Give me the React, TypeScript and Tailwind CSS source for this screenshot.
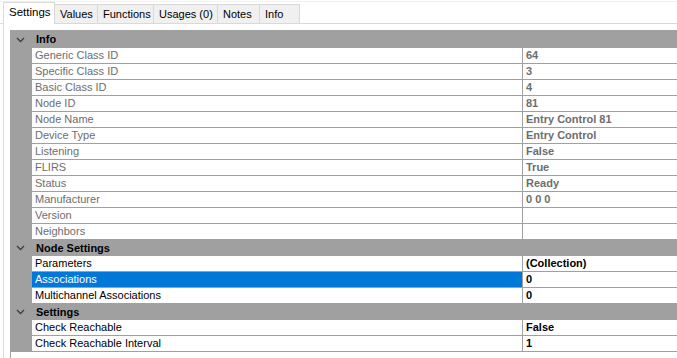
const TABS: [string, string][] = [
  ["Settings", "w-[52px]"],
  ["Values", "w-[44px]"],
  ["Functions", "w-[57px]"],
  ["Usages (0)", "w-[65px]"],
  ["Notes", "w-[43px]"],
  ["Info", "w-[41px]"],
];

type Row = { label: string; value: string; readOnly?: boolean; selected?: boolean };
type Section = { title: string; rows: Row[] };

const SECTIONS: Section[] = [
  {
    title: "Info",
    rows: [
      { label: "Generic Class ID", value: "64", readOnly: true },
      { label: "Specific Class ID", value: "3", readOnly: true },
      { label: "Basic Class ID", value: "4", readOnly: true },
      { label: "Node ID", value: "81", readOnly: true },
      { label: "Node Name", value: "Entry Control 81", readOnly: true },
      { label: "Device Type", value: "Entry Control", readOnly: true },
      { label: "Listening", value: "False", readOnly: true },
      { label: "FLIRS", value: "True", readOnly: true },
      { label: "Status", value: "Ready", readOnly: true },
      { label: "Manufacturer", value: "0 0 0", readOnly: true },
      { label: "Version", value: "", readOnly: true },
      { label: "Neighbors", value: "", readOnly: true },
    ],
  },
  {
    title: "Node Settings",
    rows: [
      { label: "Parameters", value: "(Collection)" },
      { label: "Associations", value: "0", selected: true },
      { label: "Multichannel Associations", value: "0" },
    ],
  },
  {
    title: "Settings",
    rows: [
      { label: "Check Reachable", value: "False" },
      { label: "Check Reachable Interval", value: "1" },
    ],
  },
];

function Chevron() {
  return (
    <svg width="9" height="6" viewBox="0 0 9 6" className="ml-[6px] mr-[11px]">
      <polyline points="1,1 4.5,4.5 8,1" fill="none" stroke="#3c3c3c" strokeWidth="1.3" />
    </svg>
  );
}

function PropRow({ row }: { row: Row }) {
  const text = row.readOnly ? "text-[#6d6d6d]" : "text-black";
  return (
    <div className="flex h-[16px]">
      <div className="w-[22px] shrink-0 bg-[#a0a0a0]" />
      <div
        className={`w-[491px] shrink-0 border-b border-r border-[#a0a0a0] pl-[3px] leading-[15px] ${
          row.selected ? "bg-[#0078d7] text-white" : `bg-white ${text}`
        }`}
      >
        {row.label}
      </div>
      <div className={`flex-1 border-b border-[#a0a0a0] pl-[3px] leading-[15px] font-bold ${text}`}>
        {row.value}
      </div>
    </div>
  );
}

export default function App() {
  return (
    <div className="w-[677px] h-[358px] bg-white overflow-hidden flex flex-col font-['Liberation_Sans',Arial,sans-serif] text-[11px]">
      <div className="h-[1px] shrink-0" />
      <div className="h-[1px] shrink-0 bg-[#f0f0f0]" />
      {/* tab strip */}
      <div className="h-[22px] shrink-0 flex items-end pl-[3px] border-b border-[#d9d9d9]">
        {TABS.map(([t, w], i) =>
          i === 0 ? (
            <div
              key={t}
              className={`${w} h-[22px] -mb-px pl-[5px] bg-white border border-b-0 border-[#d9d9d9] leading-[19px] text-[11.5px] text-black relative z-10 whitespace-nowrap`}
            >
              {t}
            </div>
          ) : (
            <div
              key={t}
              className={`${w} h-[19px] -ml-px pl-[5px] bg-[#f0f0f0] border border-b-0 border-[#d9d9d9] leading-[18px] text-[11px] text-black whitespace-nowrap`}
            >
              {t}
            </div>
          )
        )}
      </div>
      {/* tab page */}
      <div className="flex-1 border-l border-[#d9d9d9] ml-[3px] pl-[6px] pt-[6px] flex flex-col">
        <div className="flex flex-col">
          {SECTIONS.map((s, si) => (
            <div key={s.title}>
              <div
                className={`${si === 0 ? "h-[18px] pt-[1px]" : "h-[16px]"} bg-[#a0a0a0] flex items-center font-bold text-black`}
              >
                <Chevron />
                <span className="leading-[15px]">{s.title}</span>
              </div>
              {s.rows.map((r) => (
                <PropRow key={r.label} row={r} />
              ))}
            </div>
          ))}
        </div>
        <div className="flex-1 border-l border-[#a0a0a0]" />
      </div>
    </div>
  );
}
